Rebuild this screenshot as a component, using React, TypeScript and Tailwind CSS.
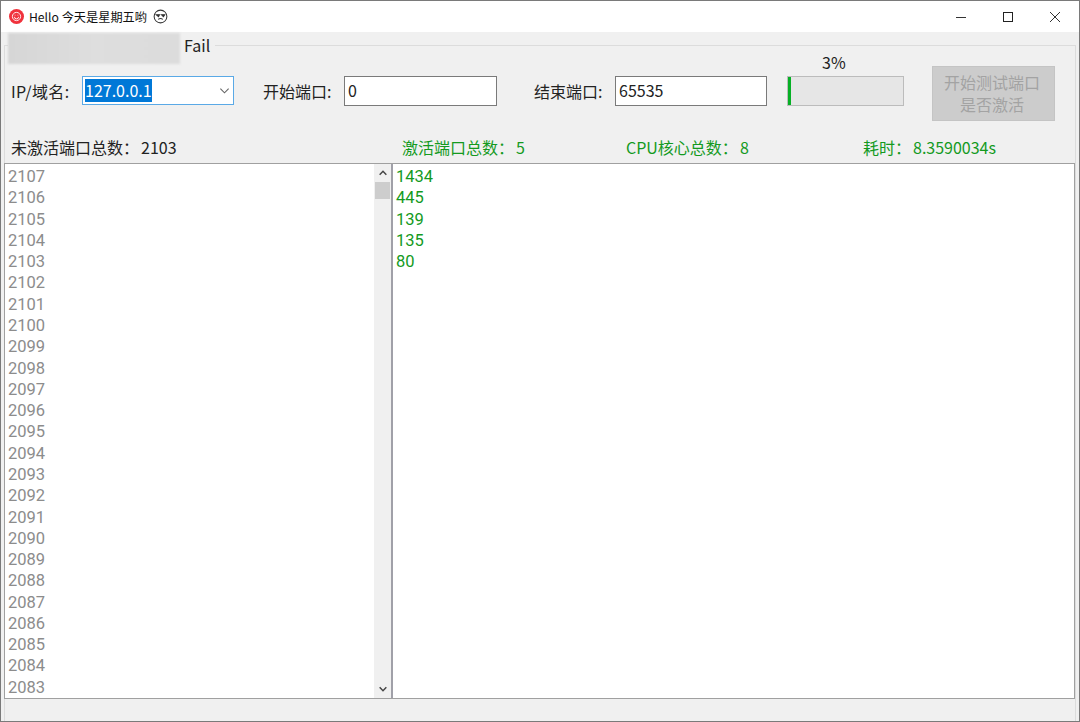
import React from "react";

const left = Array.from({ length: 25 }, (_, i) => 2107 - i);
const right = [1434, 445, 139, 135, 80];

export default function App() {
  return (
    <div className="w-[1080px] h-[722px] overflow-hidden flex flex-col bg-[#f0f0f0] border border-[#7a7a7a] font-['Noto_Sans_CJK_SC','Noto_Sans',sans-serif] text-[16px] leading-[22px] text-[#222]">
      {/* title bar */}
      <div className="h-[31px] shrink-0 bg-white flex items-center">
        <div className="ml-[8px] w-[15px] h-[15px] rounded-full bg-[#f0323c] flex items-center justify-center">
          <svg viewBox="0 0 16 16" className="w-[11px] h-[11px]" fill="none" stroke="#fff" strokeWidth="1.3">
            <circle cx="8" cy="8" r="6" />
            <path d="M5 8.500a3 3 0 0 0 6 0" />
            <path d="M6 5.500v1M10 5.500v1" />
          </svg>
        </div>
        <span className="ml-[5px] text-[12.2px] leading-[16px] text-[#111]">Hello 今天是星期五哟</span>
        <svg viewBox="0 0 16 16" className="ml-[6px] w-[15px] h-[15px]" fill="none" stroke="#333" strokeWidth="1.1">
          <circle cx="8" cy="8" r="6.800" />
          <path d="M3.500 6.200h3.400l-1 2zM9.100 6.200h3.400l-1.400 2z" fill="#333" />
          <path d="M5.500 11c1.500-1 3.500-1 5 0" />
        </svg>
        <div className="ml-auto mr-[1px] flex items-center h-full">
          <div className="w-[47px] flex justify-center">
            <svg viewBox="0 0 12 12" className="w-[12px] h-[12px]" stroke="#333" strokeWidth="1"><path d="M1 6.500h10" /></svg>
          </div>
          <div className="w-[47px] flex justify-center">
            <svg viewBox="0 0 12 12" className="w-[12px] h-[12px]" stroke="#222" strokeWidth="1" fill="none"><rect x="1.500" y="1.500" width="9" height="9" /></svg>
          </div>
          <div className="w-[47px] flex justify-center">
            <svg viewBox="0 0 12 12" className="w-[12px] h-[12px]" stroke="#333" strokeWidth="1"><path d="M1 1l10 10M11 1L1 11" /></svg>
          </div>
        </div>
      </div>

      {/* group box */}
      <div className="relative mt-[13px] mx-[3px] flex-1 min-h-0 flex flex-col border border-[#dcdcdc] border-b-0">
        <div className="absolute left-[3px] top-[-13px] flex items-start bg-[#f0f0f0] pr-[5px]">
          <div className="w-[172px] h-[31px] bg-gradient-to-r from-[#d6d6d6] via-[#dedede] to-[#dcdcdc] blur-[1px]" />
          <span className="ml-[4px] mt-[1px] text-[#222]">Fail</span>
        </div>

        {/* form row */}
        <div className="h-[75px] shrink-0 flex items-start">
          <span className="ml-[6px] mt-[34px] w-[71px] tracking-[0.4px]">IP/域名:</span>
          <div className="mt-[30px] w-[152px] h-[29px] bg-white border border-[#5aa9e6] flex items-center pl-[2px] pr-[3px]">
            <span className="bg-[#0078d7] text-white leading-[23px] h-[23px]">127.0.0.1</span>
            <svg viewBox="0 0 12 12" className="ml-auto w-[11px] h-[11px]" fill="none" stroke="#666" strokeWidth="1.2"><path d="M1.500 4l4.500 4.500L10.500 4" /></svg>
          </div>
          <span className="ml-[29px] mt-[34px] w-[81px]">开始端口:</span>
          <div className="mt-[30px] w-[153px] h-[30px] bg-white border border-[#7a7a7a] pl-[3px] leading-[27px]">0</div>
          <span className="ml-[37px] mt-[34px] w-[81px]">结束端口:</span>
          <div className="mt-[30px] w-[152px] h-[30px] bg-white border border-[#7a7a7a] pl-[3px] leading-[27px]">65535</div>
          <div className="ml-[20px] flex flex-col w-[117px]">
            <span className="mt-[5px] ml-[35px]">3%</span>
            <div className="mt-[3px] w-full h-[30px] bg-[#e6e6e6] border border-[#bcbcbc] flex">
              <div className="w-[3px] bg-[#06b025]" />
            </div>
          </div>
          <div className="ml-[28px] mt-[20px] w-[123px] h-[55px] bg-[#cccccc] border border-[#c4c4c4] flex flex-col items-center justify-center pr-[3px] pb-[1px] text-[#a3a3a3]">
            <span>开始测试端口</span>
            <span>是否激活</span>
          </div>
        </div>

        {/* stats row */}
        <div className="h-[42px] shrink-0 flex items-center pt-[9px]">
          <span className="ml-[6px] w-[391px]">未激活端口总数：<span className="ml-[2px]">2103</span></span>
          <span className="w-[224px] text-[#149a1e]">激活端口总数：<span className="ml-[2px]">5</span></span>
          <span className="w-[237px] text-[#149a1e]">CPU核心总数：<span className="ml-[2px]">8</span></span>
          <span className="text-[#149a1e]">耗时：<span className="ml-[2px]">8.3590034s</span></span>
        </div>

        {/* lists */}
        <div className="flex h-[536px] shrink-0 -ml-[1px] border border-[#a0a0a0] bg-white overflow-hidden font-['Roboto',sans-serif] text-[16.5px]">
          <div className="w-[369px] pl-[3px] pt-[2px] text-[#8c8c8c]">
            {left.map((n) => (
              <div key={n} className="h-[21.29px] leading-[21.29px]">{n}</div>
            ))}
          </div>
          <div className="w-[17px] bg-[#f0f0f0] flex flex-col items-center">
            <svg viewBox="0 0 12 12" className="mt-[4px] w-[10px] h-[10px]" fill="none" stroke="#444" strokeWidth="1.800"><path d="M2 8l4-4 4 4" /></svg>
            <div className="mt-[4px] w-[15px] h-[17px] bg-[#cdcdcd]" />
            <svg viewBox="0 0 12 12" className="mt-auto mb-[4px] w-[10px] h-[10px]" fill="none" stroke="#444" strokeWidth="1.800"><path d="M2 4l4 4 4-4" /></svg>
          </div>
          <div className="w-[2px] bg-[#a0a0a8]" />
          <div className="flex-1 pl-[3px] pt-[2px] text-[#149a1e]">
            {right.map((n) => (
              <div key={n} className="h-[21.29px] leading-[21.29px]">{n}</div>
            ))}
          </div>
        </div>
      </div>
    </div>
  );
}
